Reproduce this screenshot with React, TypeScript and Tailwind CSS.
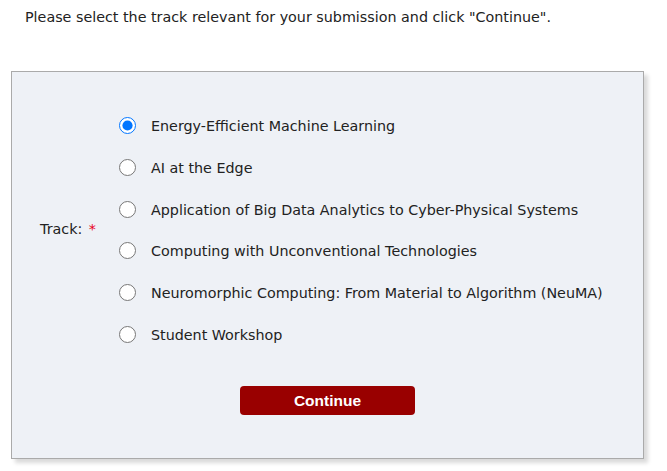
import { useState } from "react"

const TRACKS = [
  "Energy-Efficient Machine Learning",
  "AI at the Edge",
  "Application of Big Data Analytics to Cyber-Physical Systems",
  "Computing with Unconventional Technologies",
  "Neuromorphic Computing: From Material to Algorithm (NeuMA)",
  "Student Workshop",
]

export default function App() {
  const [track, setTrack] = useState(0)

  return (
    <div className="min-h-[471px] w-[667px] bg-white text-[14.3px] text-[#222] [font-family:'DejaVu_Sans',Verdana,sans-serif]">
      <p className="pl-[25px] pt-[9px] leading-[17px]">
        Please select the track relevant for your submission and click "Continue".
      </p>

      <div className="ml-[11px] mt-[45px] w-[633px] border border-[#aaaaaa] bg-[#eef1f6] pb-[43px] pt-[33px] shadow-[4px_4px_4px_rgba(0,0,0,0.15)]">
        <div className="flex items-center">
          <div className="w-[107px] pl-[28px]">
            Track: <span className="ml-[2px] text-[#e8001c]">*</span>
          </div>
          <div className="flex flex-col">
            {TRACKS.map((t, i) => (
              <label key={t} className="flex h-[41.7px] cursor-pointer items-center">
                <input
                  type="radio"
                  name="track"
                  checked={track === i}
                  onChange={() => setTrack(i)}
                  className="m-0 h-[17px] w-[17px] accent-[#0075ff]"
                />
                <span className="ml-[15px] translate-y-[1px]">{t}</span>
              </label>
            ))}
          </div>
        </div>

        <div className="mt-[31px] flex justify-center">
          <button className="h-[29px] w-[175px] rounded-[4px] bg-[#990000] text-[15.5px] font-bold text-white [font-family:'Liberation_Sans',Arial,sans-serif]">
            Continue
          </button>
        </div>
      </div>
    </div>
  )
}
